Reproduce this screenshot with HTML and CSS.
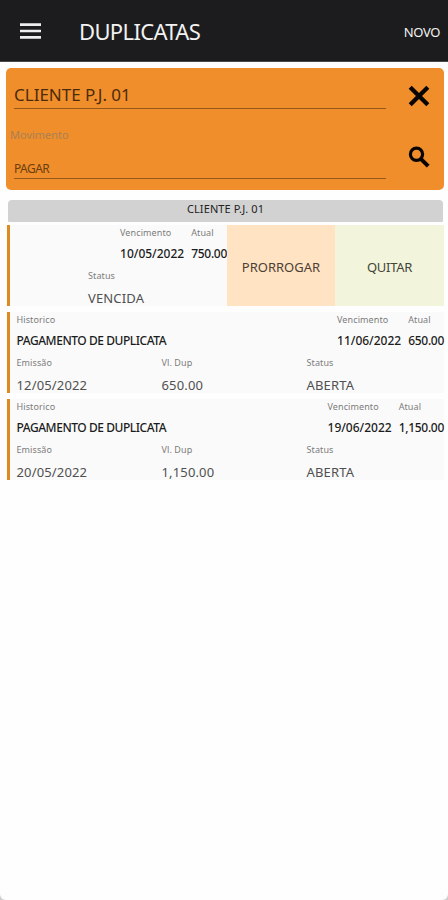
FILE: index.html
```html
<!DOCTYPE html>
<html lang="pt-BR">
<head>
<meta charset="utf-8">
<title>Duplicatas</title>
<link rel="stylesheet" href="styles.css">
</head>
<body>
<div class="screen">
<header class="bar">
  <svg class="menu" width="21" height="16" viewBox="0 0 21 16"><path d="M0 1.6h21M0 8h21M0 14.4h21" stroke="#eee" stroke-width="2.6"/></svg>
  <h1>DUPLICATAS</h1>
  <span class="novo">NOVO</span>
</header>
<main>
  <section class="filter">
    <div class="fields">
      <div class="client">CLIENTE P.J. 01</div>
      <div class="caption">Movimento</div>
      <div class="kind">PAGAR</div>
    </div>
    <div class="icons">
      <svg width="22" height="22" viewBox="0 0 22 22"><path d="M2.2 2.2l17.6 17.6M19.8 2.2L2.2 19.8" stroke="#080500" stroke-width="4.3"/></svg>
      <svg width="22" height="22" viewBox="0 0 22 22"><circle cx="8.5" cy="8.3" r="6.1" fill="none" stroke="#080500" stroke-width="3.2"/><path d="M12.8 12.8l7.4 7.4" stroke="#080500" stroke-width="4"/></svg>
    </div>
  </section>
  <div class="group">CLIENTE P.J. 01</div>
  <article class="card swiped">
    <div class="body">
      <div class="top">
        <div class="pair due"><span class="label">Vencimento</span><b>10/05/2022</b></div>
        <div class="pair money"><span class="label">Atual</span><b>750.00</b></div>
      </div>
      <div class="bottom">
        <div class="pair"><span class="label">Status</span><span class="value">VENCIDA</span></div>
      </div>
    </div>
    <div class="action extend">PRORROGAR</div>
    <div class="action settle">QUITAR</div>
  </article>
  <article class="card">
    <div class="body">
      <div class="top">
        <div class="pair history"><span class="label">Historico</span><b>PAGAMENTO DE DUPLICATA</b></div>
        <div class="pair due"><span class="label">Vencimento</span><b>11/06/2022</b></div>
        <div class="pair money"><span class="label">Atual</span><b>650.00</b></div>
      </div>
      <div class="bottom">
        <div class="pair"><span class="label">Emissão</span><span class="value">12/05/2022</span></div>
        <div class="pair"><span class="label">Vl. Dup</span><span class="value">650.00</span></div>
        <div class="pair"><span class="label">Status</span><span class="value">ABERTA</span></div>
      </div>
    </div>
  </article>
  <article class="card">
    <div class="body">
      <div class="top">
        <div class="pair history"><span class="label">Historico</span><b>PAGAMENTO DE DUPLICATA</b></div>
        <div class="pair due"><span class="label">Vencimento</span><b>19/06/2022</b></div>
        <div class="pair money"><span class="label">Atual</span><b>1,150.00</b></div>
      </div>
      <div class="bottom">
        <div class="pair"><span class="label">Emissão</span><span class="value">20/05/2022</span></div>
        <div class="pair"><span class="label">Vl. Dup</span><span class="value">1,150.00</span></div>
        <div class="pair"><span class="label">Status</span><span class="value">ABERTA</span></div>
      </div>
    </div>
  </article>
</main>
</div>
</body>
</html>
```
FILE: styles.css
```css
* { box-sizing: border-box; }
body {
  margin: 0;
  background: #cfcfcf;
  font-family: "Noto Sans", sans-serif;
  color: #3c3c3c;
  white-space: nowrap;
}
.screen {
  height: 900px;
  overflow: hidden;
  border-radius: 0 0 6px 6px;
  background: #fefefe;
}
.bar {
  display: flex;
  align-items: center;
  height: 62px;
  padding: 2px 8px 0 20px;
  background: #1c1c1e;
  border-bottom: 1px solid #4a4a4b;
  color: #f2f2f2;
}
.menu { margin: -1px 38px 0 0; }
h1 {
  flex: 1;
  margin: -2px 0 0;
  font-size: 22px;
  line-height: 30px;
  font-weight: 400;
  letter-spacing: -0.65px;
}
.novo { font-size: 13px; letter-spacing: -0.4px; }
main { padding: 6px 4px 0 6px; }
.filter {
  display: flex;
  height: 122px;
  border-radius: 5px;
  background: #f08e2b;
}
.fields { width: 380px; padding-left: 8px; }
.client {
  height: 41px;
  padding-top: 14px;
  border-bottom: 1px solid #96591c;
  font-size: 17px;
  line-height: 25px;
  color: #4b2b0c;
}
.caption {
  margin-left: -4px;
  padding-top: 18px;
  font-size: 11px;
  line-height: 16px;
  color: #a98153;
}
.kind {
  height: 36px;
  padding-top: 18px;
  border-bottom: 1px solid #96591c;
  font-size: 12px;
  line-height: 16px;
  letter-spacing: -0.55px;
  color: #6b3e10;
}
.icons {
  display: flex;
  flex-direction: column;
  gap: 39px;
  padding: 17px 0 0 22px;
}
.group {
  height: 22px;
  margin: 10px 1px 3px 2px;
  border-radius: 4px 4px 1px 1px;
  background: #d2d2d2;
  font-size: 11px;
  line-height: 18px;
  text-align: center;
  letter-spacing: 0.1px;
  color: #222;
}
.card {
  display: flex;
  height: 81px;
  margin-bottom: 6px;
  border-left: 3px solid #de8a22;
  margin-left: 0.5px;
  background: #fafafa;
}
.body { width: 435px; padding-left: 0.5px; }
.top { display: flex; height: 43px; }
.bottom { display: grid; grid-template-columns: 145px 145px 1fr; padding-left: 6.5px; }
.pair { display: flex; flex-direction: column; }
.history { flex: 1; padding-left: 6.5px; }
.label { font-size: 9px; line-height: 15px; letter-spacing: 0.1px; color: #7c7c7c; }
.pair b { font-size: 12px; line-height: 28px; font-weight: 500; color: #1c1c1c; }
.history b { letter-spacing: -0.45px; }
.money { margin-left: 7px; }
.money b { letter-spacing: -0.3px; }
.value { padding-top: 7px; font-size: 13px; line-height: 16px; letter-spacing: 0.15px; color: #505050; }
.swiped .body { width: 217.5px; }
.swiped .top { justify-content: flex-end; }
.swiped .bottom { padding-left: 78px; }
.action {
  display: flex;
  align-items: center;
  justify-content: center;
  padding-top: 3px;
  width: 108px;
  font-size: 13px;
}
.extend { background: #ffe3c3; color: #4c4034; }
.settle { flex: 1; background: #f2f4dc; color: #44443a; letter-spacing: -0.3px; }
```
